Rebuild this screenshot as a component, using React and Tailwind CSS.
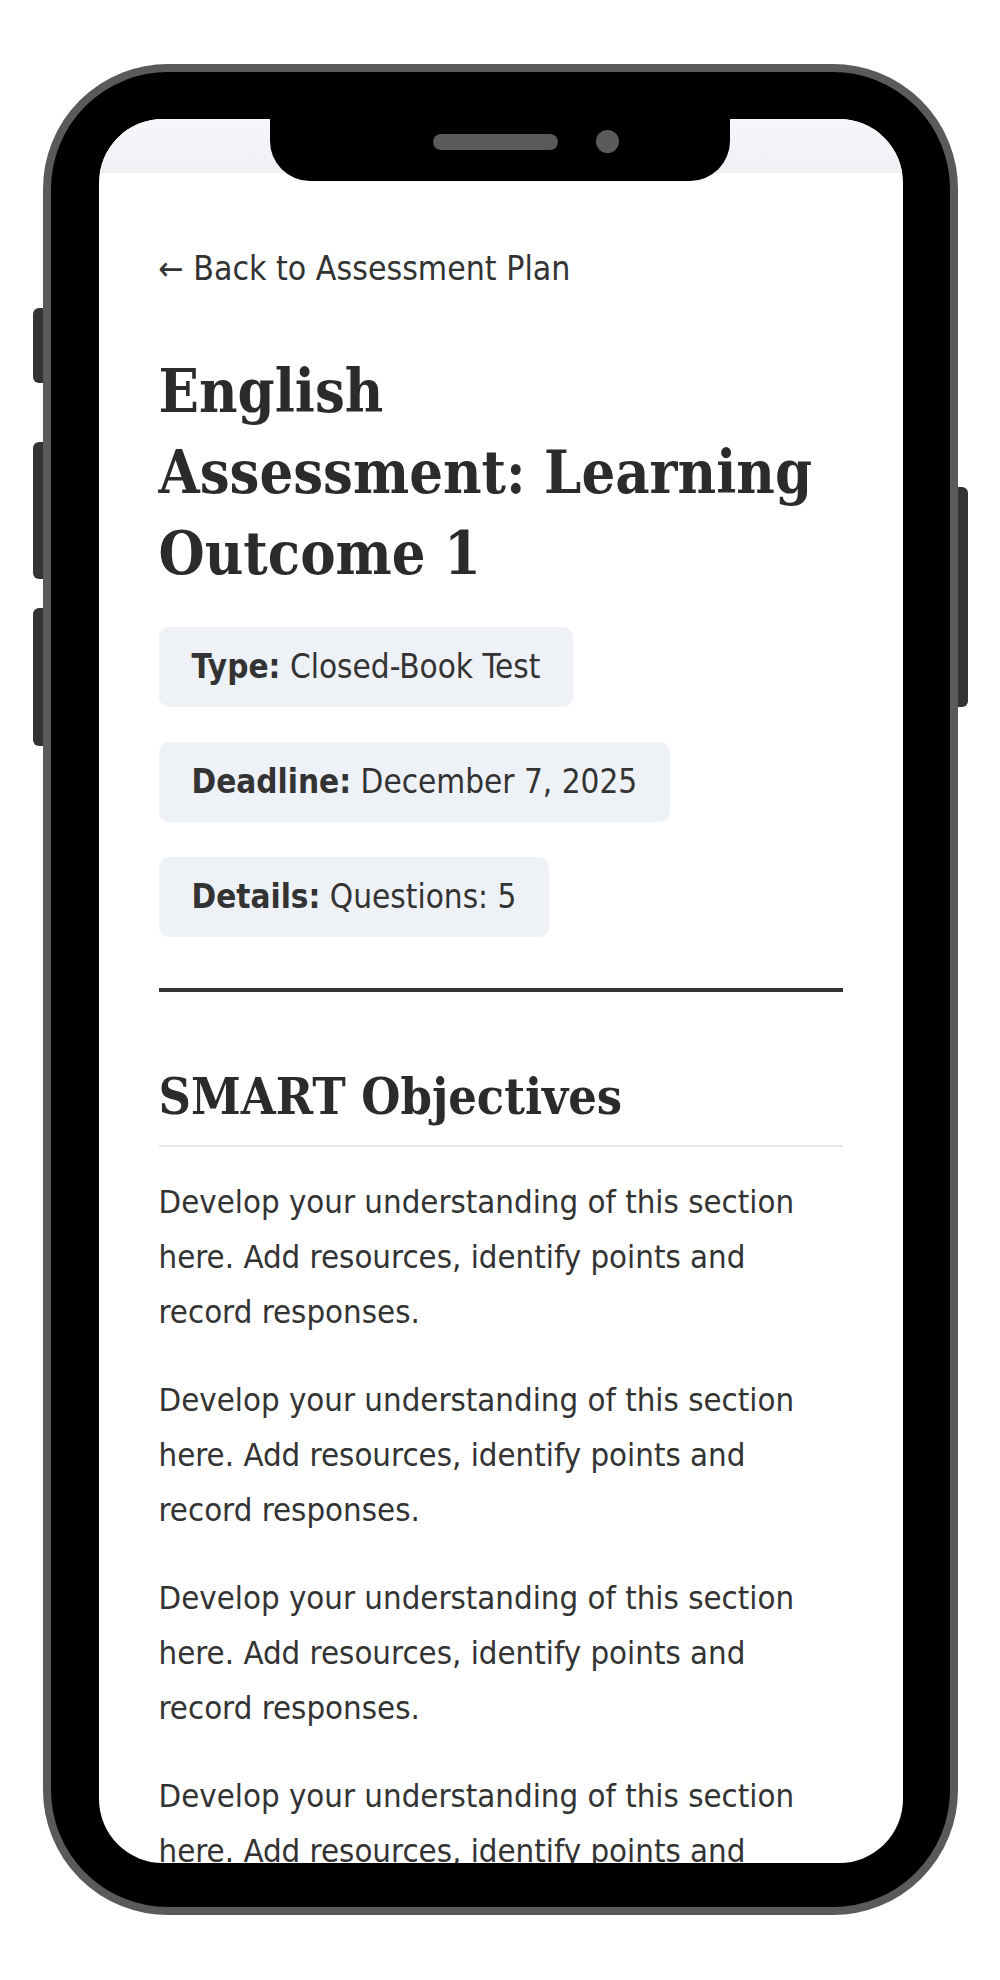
const body = { fontFamily: "'DejaVu Sans Condensed', 'DejaVu Sans', Verdana, sans-serif" };
const slab = { fontFamily: "'DejaVu Serif Condensed', 'DejaVu Serif', serif" };

function Pill({ label, value }) {
  return (
    <div className="self-start rounded-[10px] bg-[#eef2f7] px-[33px] py-[18px] text-[33px] leading-[44px] text-[#333]">
      <span className="font-bold">{label}</span> {value}
    </div>
  );
}

const para = "Develop your understanding of this section here. Add resources, identify points and record responses.";

export default function App() {
  return (
    <div className="min-h-[1980px] bg-white flex justify-center pt-[64px]" style={body}>
      <div className="relative w-[915px] h-[1851px] rounded-[125px] border-[8px] border-[#5a5a5a] bg-black pt-[47px] pl-[48px] pr-[47px] pb-[44px]">
        {/* side buttons */}
        <div className="absolute left-[-18px] top-[236px] w-[10px] h-[75px] rounded-l-[6px] bg-[#333]" />
        <div className="absolute left-[-18px] top-[370px] w-[10px] h-[137px] rounded-l-[6px] bg-[#333]" />
        <div className="absolute left-[-18px] top-[536px] w-[10px] h-[138px] rounded-l-[6px] bg-[#333]" />
        <div className="absolute right-[-18px] top-[415px] w-[10px] h-[220px] rounded-r-[6px] bg-[#333]" />

        {/* notch */}
        <div className="absolute left-1/2 top-0 z-10 -translate-x-1/2 w-[460px] h-[109px] rounded-b-[40px] bg-black flex items-center justify-center gap-[38px] pl-[51px] pt-[58px] pb-[28px]">
          <div className="w-[125px] h-[16px] rounded-full bg-[#5a5a5a]" />
          <div className="w-[23px] h-[23px] rounded-full bg-[#5a5a5a]" />
        </div>

        <div className="w-full h-full rounded-[64px] overflow-hidden bg-white flex flex-col">
          <div className="h-[54px] shrink-0 bg-linear-to-b from-[#f6f7fa] to-[#eef0f4]" />
          <div className="flex flex-col px-[60px] pt-[74px] text-[#333]">
            <a className="text-[33.5px] leading-[44px] text-[#333]">← Back to Assessment Plan</a>

            <h1 className="mt-[60px] text-[59px] leading-[81px] font-bold text-[#2b2b2d]" style={slab}>
              <span className="block">English</span>
              <span className="block">Assessment: Learning</span>
              <span className="block">Outcome 1</span>
            </h1>

            <div className="mt-[33px] flex flex-col gap-[35px]">
              <Pill label="Type:" value="Closed-Book Test" />
              <Pill label="Deadline:" value="December 7, 2025" />
              <Pill label="Details:" value="Questions: 5" />
            </div>

            <div className="mt-[51px] h-[4px] bg-[#333]" />

            <h2 className="mt-[70px] pb-[13px] border-b-2 border-[#e6e6e6] text-[50px] leading-[70px] font-bold text-[#2b2b2d]" style={slab}>
              SMART Objectives
            </h2>

            <div className="mt-[28px] flex flex-col gap-[33px] text-[32.7px] leading-[55px]">
              <p>{para}</p>
              <p>{para}</p>
              <p>{para}</p>
              <p>{para}</p>
              <p>{para}</p>
            </div>
          </div>
        </div>
      </div>
    </div>
  );
}
